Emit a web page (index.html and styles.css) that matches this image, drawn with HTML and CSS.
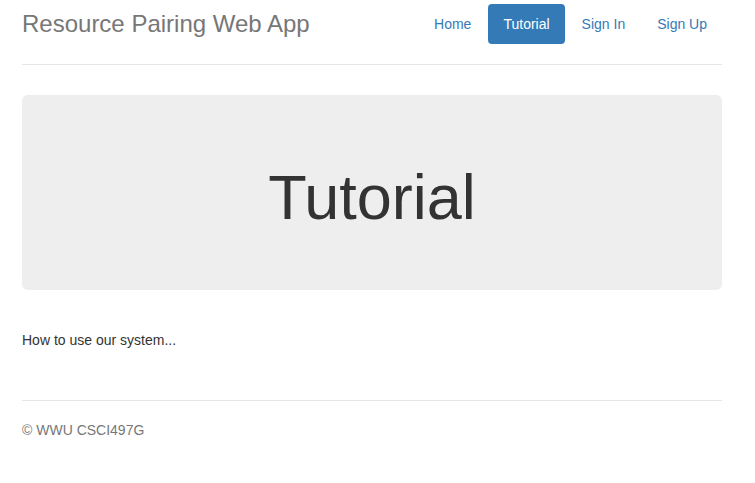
FILE: index.html
```html
<!DOCTYPE html>
<html lang="en">
<head>
<meta charset="utf-8">
<title>Tutorial</title>
<link rel="stylesheet" href="styles.css">
</head>
<body>
<div class="container">
  <div class="header">
    <h3 class="brand">Resource Pairing Web App</h3>
    <ul class="nav">
      <li><a href="#">Home</a></li>
      <li class="active"><a href="#">Tutorial</a></li>
      <li><a href="#">Sign In</a></li>
      <li><a href="#">Sign Up</a></li>
    </ul>
  </div>
  <div class="jumbotron">
    <h1>Tutorial</h1>
  </div>
  <div class="marketing">
    <p>How to use our system...</p>
  </div>
  <footer class="footer">
    <p>&copy; WWU CSCI497G</p>
  </footer>
</div>
</body>
</html>
```
FILE: styles.css
```css
* { box-sizing: border-box; }
html, body { margin: 0; padding: 0; }
body {
  font-family: "Liberation Sans", Arial, Helvetica, sans-serif;
  font-size: 14px;
  line-height: 1.42857143;
  color: #333;
  background: #fff;
}
a { color: #337ab7; text-decoration: none; }
.container {
  width: 700px;
  margin-left: 22px;
  padding-top: 4px;
}
.header {
  display: flex;
  justify-content: space-between;
  align-items: flex-start;
  padding-bottom: 20px;
  border-bottom: 1px solid #e5e5e5;
}
.brand {
  margin: 0;
  font-size: 24px;
  font-weight: 500;
  line-height: 40px;
  color: #777;
}
.nav {
  display: flex;
  list-style: none;
  margin: 0;
  padding: 0;
  gap: 2px;
}
.nav a {
  display: block;
  padding: 10px 15px;
  line-height: 20px;
  border-radius: 4px;
}
.nav .active a {
  background: #337ab7;
  color: #fff;
}
.jumbotron {
  margin-top: 30px;
  padding: 48px 0;
  background: #eee;
  border-radius: 6px;
  text-align: center;
}
.jumbotron h1 {
  margin: 20px 0 10px;
  font-size: 63px;
  font-weight: 500;
  line-height: 1.1;
  color: #333;
}
.marketing {
  padding-top: 40px;
  padding-bottom: 40px;
}
.marketing p { margin: 0 0 10px; }
.footer {
  padding-top: 19px;
  color: #777;
  border-top: 1px solid #e5e5e5;
}
.footer p { margin: 0 0 10px; }
```
